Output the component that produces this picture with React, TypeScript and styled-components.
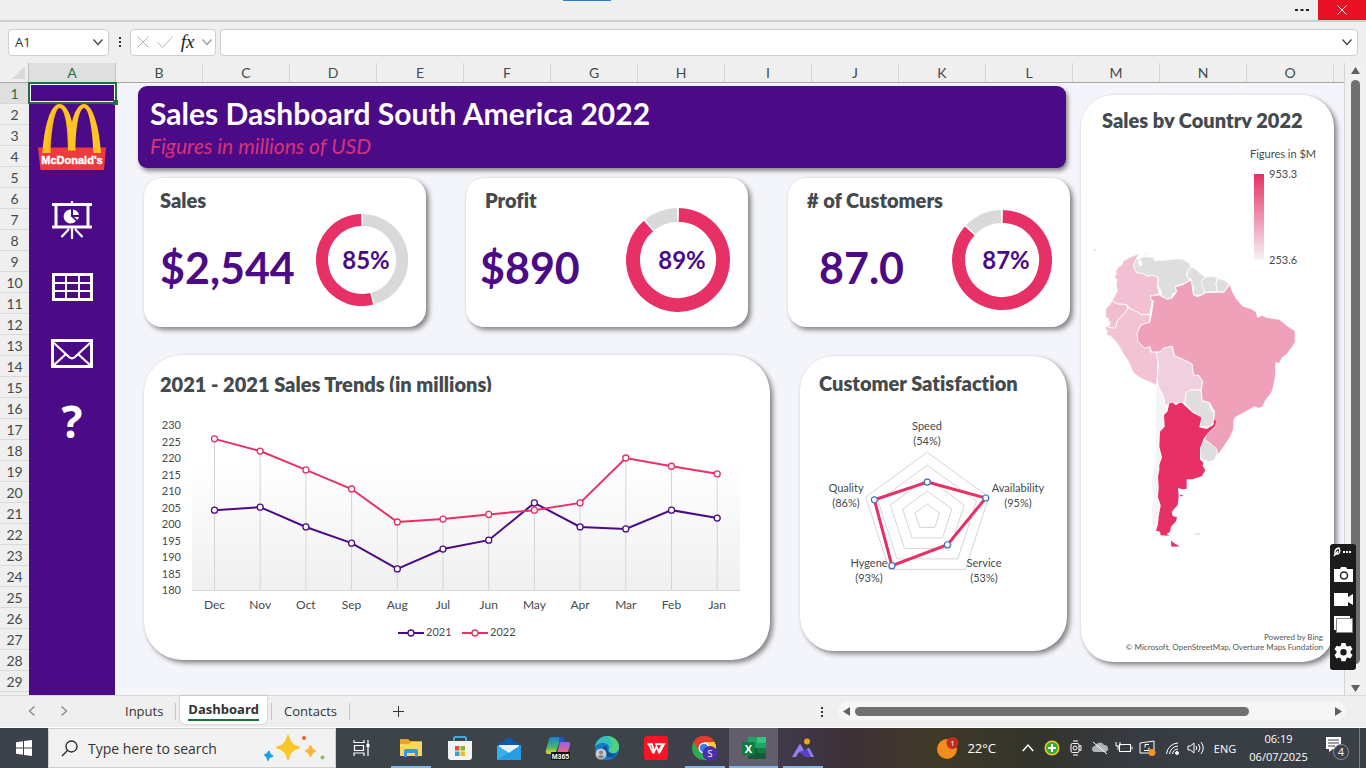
import React from 'react';
import styled, { createGlobalStyle } from 'styled-components';

const PURPLE = '#4b0b86';
const PINK = '#e73065';
const INK = '#444a4d';
const UI = '"Open Sans", "Noto Sans", sans-serif';
const BODY = 'Lato, "Open Sans", sans-serif';

const Global = createGlobalStyle`
  * { box-sizing: border-box; }
  html, body { margin: 0; padding: 0; }
  body { background: #efefef; font-family: ${BODY}; color: ${INK}; font-variant-ligatures: none; }
  button { font: inherit; color: inherit; background: none; border: 0; padding: 0; cursor: pointer; }
  input { font: inherit; color: inherit; border: 0; outline: 0; background: none; padding: 0; min-width: 0; }
  svg { display: block; }
  h1, h2, p { margin: 0; }
`;

const Page = styled.div`
  min-height: 100vh;
  display: flex;
  flex-direction: column;
`;

/* ---------- window top ---------- */
const TitleBar = styled.header`
  height: 20px;
  display: flex;
  justify-content: flex-end;
  align-items: stretch;
  background: #efefef;
  position: relative;
`;
const Progress = styled.span`
  position: absolute;
  left: 563px;
  top: 0;
  width: 48px;
  height: 1px;
  background: #2f7dc8;
`;
const MoreButton = styled.button`
  width: 32px;
  display: grid;
  place-items: center;
`;
const CloseButton = styled.button`
  width: 48px;
  display: grid;
  place-items: center;
  background: #e81123;
`;
const FormulaBar = styled.div`
  height: 43px;
  display: flex;
  align-items: center;
  padding: 0 8px 1px;
  border-top: 2px solid #cfcfcf;
  background: #efefef;
`;
const Field = styled.div<{ $w?: number }>`
  height: 27px;
  ${p => (p.$w ? `width: ${p.$w}px;` : 'flex: 1;')}
  display: flex;
  align-items: center;
  justify-content: space-between;
  padding: 0 4px 0 6px;
  background: #fff;
  border: 1px solid #cfcfcf;
  border-radius: 4px;
  font: 13px ${UI};
  color: #333;
  input { flex: 1; }
`;
const Dots = styled.span`
  width: 21px;
  display: grid;
  place-items: center;
`;
const Tools = styled.div`
  width: 86px;
  height: 27px;
  margin-right: 4px;
  padding: 0 2px 0 5px;
  display: flex;
  align-items: center;
  justify-content: space-between;
  background: #fff;
  border: 1px solid #cfcfcf;
  border-radius: 4px;
`;
const Fx = styled.em`
  font: italic 19px "Liberation Serif", serif;
  color: #222;
  line-height: 20px;
`;

/* ---------- sheet ---------- */
const SheetArea = styled.div`
  flex: 1;
  display: flex;
`;
const Sheet = styled.div`
  flex: 1;
  min-width: 0;
  display: flex;
  flex-direction: column;
  border-right: 1px solid #d5d5d5;
  overflow: hidden;
`;
const ColumnHeads = styled.div`
  height: 20px;
  display: flex;
  border-bottom: 1px solid #a9a4aa;
  font-size: 14px;
  line-height: 20px;
  text-align: center;
`;
const Corner = styled.div`
  width: 29px;
  flex: none;
  display: flex;
  justify-content: flex-end;
  align-items: flex-end;
  padding: 0 3px 3px 0;
  border-right: 1px solid #bdbdbd;
`;
const ColumnHead = styled.div<{ $on?: boolean }>`
  width: 87px;
  flex: none;
  border-right: 1px solid ${p => (p.$on ? '#c2c2c2' : '#d6d6d6')};
  background: ${p => (p.$on ? '#dfdfdf' : 'transparent')};
  color: ${p => (p.$on ? '#1f7145' : INK)};
`;
const SheetBody = styled.div`
  flex: 1;
  display: flex;
`;
const RowHeads = styled.div`
  width: 29px;
  flex: none;
  font-size: 14px;
  line-height: 22px;
  text-align: center;
`;
const RowHead = styled.div<{ $on?: boolean }>`
  height: 21px;
  border-bottom: 1px solid #d9d9d9;
  background: ${p => (p.$on ? '#dfdfdf' : 'transparent')};
  color: ${p => (p.$on ? '#1f7145' : INK)};
`;
const Side = styled.nav`
  width: 86px;
  flex: none;
  padding-top: 21px;
  background: ${PURPLE};
  position: relative;
  display: flex;
  flex-direction: column;
  align-items: center;
`;
const Logo = styled.a`
  height: 82px;
  display: block;
`;
const SideLink = styled.a`
  width: 100%;
  height: 67px;
  display: grid;
  place-items: center;
  color: #fff;
  font: 700 44px/44px ${UI};
  text-decoration: none;
`;
const Selection = styled.span`
  position: absolute;
  left: -1px;
  top: -1px;
  right: -2px;
  height: 22px;
  border: 2px solid #1f7145;
  box-shadow: inset 0 0 0 1px #fff;
  &::after {
    content: '';
    position: absolute;
    right: -3px;
    bottom: -3px;
    width: 5px;
    height: 5px;
    background: #1f7145;
  }
`;
const Dashboard = styled.main`
  flex: 1;
  min-width: 0;
  display: flex;
  align-items: flex-start;
  gap: 11px;
  padding: 3px 10px 0 29px;
  background: #f4f5fa;
`;
const Main = styled.div`
  flex: 1;
  min-width: 0;
`;
const Banner = styled.div`
  min-height: 82px;
  margin: 0 4px 10px -6px;
  padding: 8px 12px;
  border-radius: 9px;
  background: ${PURPLE};
  box-shadow: 2px 3px 4px rgba(0, 0, 0, 0.45);
`;
const BannerTitle = styled.h1`
  font-size: 30px;
  line-height: 38px;
  font-weight: 700;
  color: #fff;
`;
const BannerSub = styled.p`
  font-size: 21px;
  line-height: 28px;
  font-style: italic;
  color: #d8327a;
`;
const Card = styled.section<{ $radius: number }>`
  background: #fff;
  border-radius: ${p => p.$radius}px;
  box-shadow: 3px 3px 5px rgba(0, 0, 0, 0.45), 0 0 2px rgba(0, 0, 0, 0.1);
`;
const Heading = styled.h2<{ $inset?: number }>`
  font-size: 20px;
  line-height: 24px;
  font-weight: 800;
  color: ${INK};
  padding-left: ${p => p.$inset ?? 0}px;
  white-space: nowrap;
`;
const Kpis = styled.div`
  display: grid;
  grid-template-columns: repeat(3, minmax(0, 1fr));
  gap: 40px;
  margin-bottom: 28px;
`;
const KpiCard = styled(Card)`
  min-height: 149px;
  display: flex;
  justify-content: space-between;
  padding: 10px 18px 0 0;
`;
const KpiValue = styled.p<{ $inset: number }>`
  margin-top: 30px;
  padding-left: ${p => p.$inset}px;
  font-size: 43px;
  line-height: 52px;
  font-weight: 700;
  color: ${PURPLE};
`;
const DonutBox = styled.div`
  display: flex;
  align-items: center;
  padding-top: 5px;
`;
const Charts = styled.div`
  display: grid;
  grid-template-columns: minmax(0, 626fr) minmax(0, 267fr);
  gap: 30px;
  align-items: start;
  margin-right: 3px;
`;
const TrendCard = styled(Card)`
  min-height: 305px;
  padding: 17px 0 0;
  svg { width: 100%; height: auto; margin-top: 8px; }
`;
const ClippedHeading = styled(Heading)`
  height: 20px;
  overflow: hidden;
`;
const RadarCard = styled(Card)`
  min-height: 295px;
  margin-top: 1px;
  padding-top: 15px;
  svg { width: 100%; height: auto; margin-top: 5px; }
`;
const MapCard = styled(Card)`
  width: 253px;
  min-height: 567px;
  margin-top: 9px;
  padding: 13px 11px 10px 0;
  display: flex;
  flex-direction: column;
`;
const MapStage = styled.div`
  flex: 1;
  display: grid;
  align-content: start;
  > * { grid-area: 1 / 1; }
`;
const Legend = styled.div`
  justify-self: end;
  width: 70px;
  margin: 18px 7px 0 0;
  font-size: 11px;
  line-height: 16px;
  white-space: nowrap;
  text-align: right;
`;
const Scale = styled.div`
  display: grid;
  grid-template-columns: 10px auto;
  gap: 5px;
  height: 106px;
  padding: 4px 0 0 8px;
  text-align: left;
  font-size: 11px;
`;
const ScaleBar = styled.span`
  margin: 8px 0;
  background: linear-gradient(#e73065, #f6f3f7);
`;
const ScaleText = styled.span`
  display: flex;
  flex-direction: column;
  justify-content: space-between;
`;
const MapShape = styled.div`
  width: 235px;
  margin-top: 117px;
`;
const Credit = styled.p`
  font-size: 8px;
  line-height: 10px;
  text-align: right;
  white-space: nowrap;
  color: #555;
`;

/* ---------- scrollbars ---------- */
const VScroll = styled.div`
  width: 21px;
  flex: none;
  display: flex;
  flex-direction: column;
  align-items: center;
  padding: 3px 0 2px;
  gap: 5px;
  background: #f1f1f1;
`;
const VThumb = styled.div`
  width: 9px;
  height: 584px;
  border-radius: 5px;
  background: #707070;
`;
const Spring = styled.span`
  flex: 1;
`;
const TabBar = styled.div`
  height: 33px;
  display: flex;
  align-items: flex-start;
  border-top: 1px solid #d9d9d9;
  border-bottom: 1px solid #fff;
  background: #efefef;
  font: 13px ${UI};
  color: #333;
`;
const TabNav = styled.div`
  width: 113px;
  height: 30px;
  display: flex;
  align-items: center;
  gap: 20px;
  padding-left: 26px;
`;
const Tab = styled.button<{ $on?: boolean }>`
  height: ${p => (p.$on ? 28 : 30)}px;
  padding: 0 ${p => (p.$on ? 8 : 12)}px;
  background: ${p => (p.$on ? '#fff' : 'transparent')};
  border-radius: 0 0 5px 5px;
  box-shadow: ${p => (p.$on ? '0 0 2px rgba(0,0,0,.3)' : 'none')};
  font-weight: ${p => (p.$on ? 700 : 400)};
  color: #333;
  span {
    display: block;
    line-height: 20px;
    border-bottom: ${p => (p.$on ? '2px solid #16733f' : '0')};
  }
`;
const Divider = styled.i<{ $m?: string }>`
  width: 1px;
  height: 17px;
  margin: ${p => p.$m ?? '7px 0 0'};
  background: #c6c6c6;
`;
const AddTab = styled.button`
  width: 96px;
  height: 30px;
  display: grid;
  place-items: center;
`;
const HScroll = styled.div`
  width: 508px;
  height: 18px;
  margin: 6px 20px 0 6px;
  display: flex;
  align-items: center;
  padding: 0 3px 0 4px;
  gap: 4px;
  border-radius: 9px;
  background: #f6f6f6;
`;
const HThumb = styled.div`
  width: 394px;
  height: 9px;
  border-radius: 5px;
  background: #707070;
`;
const TabDots = styled.span`
  width: 21px;
  height: 32px;
  display: grid;
  place-items: center;
`;

/* ---------- taskbar ---------- */
const Taskbar = styled.footer`
  height: 40px;
  display: flex;
  align-items: stretch;
  color: #fff;
  font: 11px ${UI};
  background: linear-gradient(90deg, #3b4249 0, #3d4449 45%, #403a4c 57%, #3e3038 62%, #403a28 68%, #33342c 76%, #373b42 83%, #3b3f47 100%);
`;
const TaskButton = styled.button<{ $open?: boolean; $on?: boolean }>`
  width: 49px;
  display: grid;
  place-items: center;
  position: relative;
  background: ${p => (p.$on ? '#645d6c' : 'transparent')};
  &::after {
    content: '';
    display: ${p => (p.$open ? 'block' : 'none')};
    position: absolute;
    bottom: 0;
    left: ${p => (p.$on ? 0 : 5)}px;
    right: ${p => (p.$on ? 0 : 4)}px;
    height: 2px;
    background: #7db8ea;
  }
`;
const Tasks = styled.div`
  display: flex;
  padding-left: 1px;
`;
const StartButton = styled.button`
  width: 48px;
  display: grid;
  place-items: center;
`;
const SearchBox = styled.label`
  width: 288px;
  display: flex;
  align-items: center;
  gap: 10px;
  padding: 0 9px 0 12px;
  background: #f2f2f2;
  border: 1px solid #cfcfcf;
  color: #333;
  font: 14px ${UI};
  input { flex: 1; }
  input::placeholder { color: #333; opacity: 1; }
`;
const Weather = styled.button`
  display: flex;
  align-items: center;
  gap: 7px;
  margin-right: 20px;
  font-size: 13px;
`;
const Tray = styled.div`
  display: flex;
`;
const TrayButton = styled.button`
  width: 24px;
  display: grid;
  place-items: center;
`;
const Language = styled.button`
  width: 34px;
  text-align: center;
`;
const Clock = styled.time`
  width: 73px;
  text-align: center;
  line-height: 18px;
  padding-top: 2px;
`;
const Notify = styled.button`
  width: 45px;
  display: grid;
  place-items: center;
  border-right: 1px solid #777b80;
  margin-right: 6px;
`;

/* ---------- floating capture palette ---------- */
const Palette = styled.aside`
  position: fixed;
  right: 10px;
  bottom: 98px;
  width: 26px;
  height: 126px;
  padding: 3px 0 8px;
  display: flex;
  flex-direction: column;
  align-items: center;
  justify-content: space-between;
  border-radius: 3px;
  background: #1b1b1b;
`;

const Chevron = ({ color = '#444', dir = 'down', size = 12 }: { color?: string; dir?: 'down' | 'left' | 'right' | 'up'; size?: number }) => {
  const d = {
    down: 'M1.5 3.5 6 8.5l4.5-5',
    up: 'M1.5 8.5 6 3.5l4.5 5',
    left: 'M8.500 1.500 3.500 6l5 4.500',
    right: 'M3.500 1.500l5 4.500-5 4.500',
  }[dir];
  return (
    <svg width={size} height={size} viewBox="0 0 12 12" fill="none" stroke={color} strokeWidth="1.3">
      <path d={d} />
    </svg>
  );
};

const VDots = () => (
  <svg width="4" height="12" fill="#333">
    <path d="M1 1h2v2H1zM1 5h2v2H1zM1 9h2v2H1z" />
  </svg>
);

const Arrow = ({ d }: { d: string }) => (
  <svg width="9" height="9" fill="#606060"><path d={d} /></svg>
);

/* ring segment between two clockwise angles */
const arc = (c: number, r: number, from: number, to: number) => {
  const at = (deg: number) => {
    const t = (deg * Math.PI) / 180;
    return `${(c + r * Math.sin(t)).toFixed(1)} ${(c - r * Math.cos(t)).toFixed(1)}`;
  };
  return `M${at(from)}A${r} ${r} 0 ${to - from > 180 ? 1 : 0} 1 ${at(to)}`;
};

type DonutProps = { size: number; ring: number; split: number; first: string; second: string; label: string };
const Donut = ({ size, ring, split, first, second, label }: DonutProps) => {
  const c = size / 2;
  const r = c - ring / 2;
  return (
    <svg width={size} height={size}>
      <path d={arc(c, r, 1, split - 1)} fill="none" stroke={first} strokeWidth={ring} />
      <path d={arc(c, r, split + 1, 359)} fill="none" stroke={second} strokeWidth={ring} />
      <text x={c + 4} y={c + 9} textAnchor="middle" fontSize="24" fontWeight="700" fill={PURPLE} fontFamily={BODY}>{label}</text>
    </svg>
  );
};

const kpis = [
  { title: 'Sales', value: '$2,544', head: 16, inset: 16, donut: { size: 92, ring: 12, split: 165, first: '#d9d9d9', second: PINK, label: '85%' } },
  { title: 'Profit', value: '$890', head: 19, inset: 14, donut: { size: 104, ring: 14, split: 320, first: PINK, second: '#d9d9d9', label: '89%' } },
  { title: '# of Customers', value: '87.0', head: 19, inset: 31, donut: { size: 100, ring: 13, split: 313, first: PINK, second: '#d9d9d9', label: '87%' } },
];

const months = ['Dec', 'Nov', 'Oct', 'Sep', 'Aug', 'Jul', 'Jun', 'May', 'Apr', 'Mar', 'Feb', 'Jan'];
const s2021 = [204.2, 205.1, 199.1, 194.2, 186.4, 192.4, 195.1, 206.4, 199.1, 198.5, 204.2, 201.8];
const s2022 = [225.8, 222.1, 216.4, 210.6, 200.6, 201.5, 202.9, 204.2, 206.4, 220, 217.5, 215.2];
const px = (i: number) => 70.5 + i * 45.7;
const py = (v: number) => 190 - (v - 180) * 3.3;

const Series = ({ data, color }: { data: number[]; color: string }) => (
  <g stroke={color} fill="none" strokeWidth="2">
    <polyline points={data.map((v, i) => `${px(i)},${py(v)}`).join(' ')} />
    {data.map((v, i) => (
      <circle key={i} cx={px(i)} cy={py(v)} r="3" fill="#fff" strokeWidth="1.3" />
    ))}
  </g>
);

const TrendChart = () => (
  <svg viewBox="0 0 626 250" fontFamily={BODY} fontSize="12" fill={INK}>
    <defs>
      <linearGradient id="plot" x1="0" x2="0" y1="0" y2="1">
        <stop offset="0.2" stopColor="#fff" />
        <stop offset="1" stopColor="#f0f0f0" />
      </linearGradient>
    </defs>
    <rect x="48" y="25" width="548" height="165" fill="url(#plot)" />
    <path d="M48 190.500H596" stroke="#d5d5d5" />
    {months.map((m, i) => (
      <g key={m}>
        <path d={`M${px(i)} ${py(Math.max(s2021[i], s2022[i]))}V190`} stroke="#d5d5d5" />
        <text x={px(i)} y="209" textAnchor="middle">{m}</text>
      </g>
    ))}
    {Array.from({ length: 11 }, (_, k) => 230 - k * 5).map(v => (
      <text key={v} x="37" y={py(v) + 4} textAnchor="end" fontSize="11">{v}</text>
    ))}
    <Series data={s2021} color={PURPLE} />
    <Series data={s2022} color={PINK} />
    <g strokeWidth="2">
      <path d="M254 233h26" stroke={PURPLE} />
      <circle cx="267" cy="233" r="3" fill="#fff" stroke={PURPLE} strokeWidth="1.3" />
      <path d="M318 233h26" stroke={PINK} />
      <circle cx="331" cy="233" r="3" fill="#fff" stroke={PINK} strokeWidth="1.3" />
    </g>
    <text x="282" y="236" fontSize="11">2021</text>
    <text x="346" y="236" fontSize="11">2022</text>
  </svg>
);

const spokes = [
  { name: 'Speed', v: 54, x: 127, y: 30 },
  { name: 'Availability', v: 95, x: 218, y: 92 },
  { name: 'Service', v: 53, x: 184, y: 167 },
  { name: 'Hygene', v: 93, x: 69, y: 167 },
  { name: 'Quality', v: 86, x: 46, y: 92 },
];
const spoke = (i: number, k: number) => {
  const t = (i * 72 * Math.PI) / 180;
  return [127.3 + 64.7 * k * Math.sin(t), 117 - 64.7 * k * Math.cos(t)];
};

const RadarChart = () => (
  <svg viewBox="0 0 267 200" fontFamily={BODY} fontSize="11" fill={INK} textAnchor="middle">
    {[0.2, 0.4, 0.6, 0.8, 1].map(k => (
      <polygon key={k} points={spokes.map((_, i) => spoke(i, k).join()).join(' ')} fill="none" stroke="#d5d5d5" />
    ))}
    <polygon points={spokes.map((s, i) => spoke(i, s.v / 100).join()).join(' ')} fill="none" stroke={PINK} strokeWidth="3" />
    {spokes.map((s, i) => {
      const [x, y] = spoke(i, s.v / 100);
      return (
        <g key={s.name}>
          <circle cx={x} cy={y} r="3" fill="#fff" stroke="#4472c4" strokeWidth="1.2" />
          <text x={s.x} y={s.y}>{s.name}</text>
          <text x={s.x} y={s.y + 15}>({s.v}%)</text>
        </g>
      );
    })}
  </svg>
);

const countries: [string, string][] = [
  ['#f3f4f8', 'M240 466 248 470 262 500 268 528 276 545 264 555 266 590 252 605 250 650 256 680 250 720 248 800 250 860 240 902 228 880 226 840 232 800 226 760 236 700 240 640 238 560Z'],
  ['#f2c0d3', 'M190 70 176 76 160 83 142 92 138 104 128 110 118 125 121 133 115 140 123 150 120 165 124 182 108 212 125 222 152 224 162 236 185 246 196 254 222 252 228 215 224 198 250 192 244 170 247 141 230 136 215 138 198 130 182 128 172 108 180 88Z'],
  ['#dedede', 'M180 88 195 84 205 80 232 82 236 92 270 90 300 86 320 88 340 100 345 112 334 124 332 135 342 152 318 163 298 168 302 185 290 192 288 204 275 208 258 198 254 180 246 165 247 141 230 136 215 138 198 130 182 128 172 108Z'],
  ['#dedede', 'M348 110 362 120 375 132 388 140 378 150 380 168 388 184 376 194 362 198 350 188 354 172 346 165 348 150 334 140 334 124Z'],
  ['#dedede', 'M388 142 405 138 424 142 420 160 424 185 405 185 388 188 378 168 376 154Z'],
  ['#dedede', 'M424 145 445 150 460 162 444 187 424 185 420 164Z'],
  ['#f0bccf', 'M108 212 125 222 152 224 155 236 146 250 130 265 124 272 118 295 98 292 103 275 96 277 98 266 88 262 90 235 100 226Z'],
  ['#f2c3d3', 'M152 230 162 236 185 246 196 254 222 254 222 274 212 280 195 285 183 310 186 335 205 352 222 350 224 366 240 366 246 385 244 445 240 466 220 456 205 450 186 440 170 425 158 395 142 372 130 350 118 332 105 320 92 314 94 304 87 295 96 284 98 292 118 295 124 272 146 250 155 236Z'],
  ['#eea1b9', 'M224 198 250 195 258 200 275 208 288 204 302 185 298 170 318 165 346 150 350 180 352 194 362 200 376 196 388 188 424 187 444 187 462 163 468 182 480 205 500 228 525 236 540 245 545 262 558 256 570 262 610 268 640 292 657 302 658 335 648 352 635 370 618 384 610 400 600 398 598 440 590 480 585 490 568 512 560 530 548 535 535 530 510 545 478 562 474 570 472 600 462 622 450 640 440 655 425 675 415 655 402 644 385 628 395 610 420 588 412 570 416 545 400 518 378 512 374 480 380 455 368 436 352 436 348 402 320 388 295 378 290 350 262 355 252 366 226 366 222 350 205 354 186 335 183 310 195 285 222 276 230 230 232 212 224 210Z'],
  ['#f0d0de', 'M240 368 252 366 262 355 288 348 295 378 320 388 348 402 352 436 368 436 380 455 376 480 345 480 330 490 326 518 300 520 280 520 268 528 262 500 248 470 244 445 248 400Z'],
  ['#dedede', 'M330 488 345 480 376 480 378 512 400 518 406 540 415 545 412 575 402 590 372 590 376 562 350 545 326 518Z'],
  ['#dedede', 'M385 628 402 640 420 655 425 668 415 690 398 695 376 688 372 660 378 634Z'],
];
const argentina = 'M280 520 290 518 300 526 308 520 318 518 328 528 350 548 376 562 370 592 392 597 412 585 414 570 420 572 418 588 395 610 382 628 372 655 372 688 382 698 380 708 388 720 378 738 350 748 332 748 332 776 320 778 306 774 308 798 305 825 287 845 290 858 303 862 300 874 285 890 282 905 272 912 280 917 254 916 252 905 240 902 246 882 248 860 254 826 246 802 248 770 246 740 250 720 250 705 258 682 250 650 252 605 266 590 264 555 274 545Z';

const AmericaMap = () => (
  <svg width="235" height="310" viewBox="15 45 705 930" strokeLinejoin="round">
    {countries.map(([fill, d], i) => (
      <path key={i} d={d} fill={fill} stroke="#fff" strokeWidth="2.500" />
    ))}
    <path d="M187 88 196 92 200 104 192 110 186 100Z" fill="#fff" />
    <path d={argentina} fill={PINK} />
    <path d="M285 932 298 942 312 949 286 950ZM312 795h8v4h-8z" fill={PINK} />
    <path d="M52 58h7v5h-7zM208 70h4v4h-4zM352 914l14-6h10l-8 6z" fill="#dedede" />
  </svg>
);

const McLogo = () => (
  <svg width="68" height="66" viewBox="0 0 68 66">
    <path d="M0 43.500H68L66 66H2.500Z" fill="#ee3a3f" />
    <path d="M4.500 49C6 24 12 0 21.500 0 27 0 31.500 7 34 18 36.500 7 41 0 46 0 55 0 61.500 24 63 49H55.500C54.500 26 51 4 46 4 41 4 37.500 24 37.500 46.500H30C30 24 27 4 21.500 4 17 4 13 26 12.500 49Z" fill="#ffc423" />
    <path d="M12.500 49C13 26 17 4 21.500 4 27 4 30 24 30 46.500L32 46C32 22 27 1.500 21.500 1.500 15 1.500 9 26 9 49Z" fill="#f0a51e" opacity=".3" />
    <text x="34" y="60" textAnchor="middle" fontFamily='"Liberation Sans", sans-serif' fontWeight="700" fontSize="11" fill="#fff" stroke="#fff" strokeWidth=".4">McDonald's</text>
  </svg>
);

const BoardIcon = () => (
  <svg width="40" height="38" viewBox="0 0 40 38" fill="none" stroke="#fff">
    <path d="M1 3.500H39M1 26H39" strokeWidth="3" strokeLinecap="round" />
    <path d="M4 3V26M36 3V26" strokeWidth="3" />
    <path d="M20 0V3M20 27V38M17 28 9.500 36M23 28 30.500 36" strokeWidth="2.200" />
    <path d="M19 8.500A7 7 0 1 0 24 20L19 15.500ZM21 8.500V14H27A7 7 0 0 0 21 8.500ZM27 16H22L25.500 19A7 7 0 0 0 27 16Z" fill="#fff" stroke="none" />
  </svg>
);
const TableIcon = () => (
  <svg width="41" height="28" viewBox="0 0 41 28" fill="none" stroke="#fff" strokeWidth="2">
    <rect x="1.500" y="1.500" width="38" height="25" strokeWidth="3" />
    <path d="M14 2V26M27 2V26M2 10H39M2 18H39" />
  </svg>
);
const MailIcon = () => (
  <svg width="42" height="29" viewBox="0 0 42 29" fill="none" stroke="#fff">
    <rect x="1.500" y="1.500" width="39" height="26" strokeWidth="3" />
    <path d="M3 4 18 18Q21 20.500 24 18L39 4M3 26 15 15M39 26 27 15" strokeWidth="2.200" />
  </svg>
);

const TaskViewIcon = () => (
  <svg width="17" height="16" viewBox="0 0 17 16" fill="none" stroke="#fff" strokeWidth="1.200">
    <path d="M1 0V2.500H11V0M1 16V13H11V16M1.500 5.500H10.500V10.500H1.500ZM15 0V16" />
    <path d="M13.500 4h3v3h-3z" fill="#fff" stroke="none" />
  </svg>
);
const FolderIcon = () => (
  <svg width="22" height="19" viewBox="0 0 22 19">
    <path d="M0 1Q0 0 1 0H8L10 2H21Q22 2 22 3V8H0Z" fill="#e8a522" />
    <path d="M0 5H9L11 3H22V17H0Z" fill="#fdd663" />
    <path d="M4 18V12Q4 10 6 10H16Q18 10 18 12V18H15V14H7V18Z" fill="#3f93d6" />
  </svg>
);
const StoreIcon = () => (
  <svg width="24" height="24" viewBox="0 0 24 24">
    <path d="M6 7V2.500Q6 1 7.500 1H16.500Q18 1 18 2.500V7" fill="none" stroke="#3fa9e0" strokeWidth="2" />
    <path d="M0 5H24V21Q24 24 21 24H3Q0 24 0 21Z" fill="#f3f3f3" />
    <path d="M7 10h4.500v4.500H7z" fill="#e2502a" /><path d="M12.500 10H17v4.500h-4.500z" fill="#7db829" />
    <path d="M7 15.500h4.500V20H7z" fill="#2aa3e0" /><path d="M12.500 15.500H17V20h-4.500z" fill="#f7b91b" />
  </svg>
);
const MailApp = () => (
  <svg width="24" height="23" viewBox="0 0 24 23">
    <path d="M0 8 12 0 24 8V12H0Z" fill="#0d5aa7" />
    <path d="M2 8H22V16H2Z" fill="#eaf4fb" />
    <path d="M0 8 12 16 24 8V23H0Z" fill="#35b0ee" />
    <path d="M24 8 0 23H24Z" fill="#1f8fdc" opacity=".6" />
  </svg>
);
const CopilotIcon = () => (
  <svg width="26" height="24" viewBox="0 0 26 24">
    <defs>
      <linearGradient id="ca" x1="0" x2="0" y1="0" y2="1"><stop offset="0" stopColor="#1b7fd8" /><stop offset=".6" stopColor="#46b86a" /><stop offset="1" stopColor="#f3d52b" /></linearGradient>
      <linearGradient id="cb" x1="0" x2="0" y1="0" y2="1"><stop offset="0" stopColor="#9a5cf0" /><stop offset="1" stopColor="#f46a6a" /></linearGradient>
    </defs>
    <path d="M6 1H14Q16 1 15.500 3L11 16Q10.500 18 8 18H3Q0 18 1 14L4 3Q4.500 1 6 1Z" fill="url(#ca)" />
    <path d="M14 1H17Q19 1 19.500 4L20 7H14Z" fill="#1c57c4" />
    <path d="M15 6H23Q26 6 25 9L23 16Q22 18 20 18H12Z" fill="url(#cb)" />
    <rect x="6" y="16" width="19" height="8" fill="#111" />
    <text x="15.500" y="22.500" textAnchor="middle" fontFamily='"Liberation Sans", sans-serif' fontWeight="700" fontSize="7" fill="#fff">M365</text>
  </svg>
);
const EdgeIcon = () => (
  <svg width="24" height="24" viewBox="0 0 24 24">
    <circle cx="12" cy="12" r="12" fill="#1579c8" />
    <path d="M0 11C1 4 6 0 12 0 19 0 24 5 24 11 24 15 21 17 18 17 14 17 13 15 14 13 15 9 11 7 8 7 4 7 1 9 0 11Z" fill="#35c1b9" />
    <path d="M12 0C19 0 24 5 24 11 24 15 21 17 18 17 15 17 14 16 14 14 19 12 18 4 12 0Z" fill="#57d66c" opacity=".8" />
    <path d="M8 11C6 17 11 22 18 21L22 18C15 19 11 15 12 10Z" fill="#0c4f96" />
    <circle cx="6" cy="18" r="5.500" fill="#c9cccf" />
    <circle cx="6" cy="16.500" r="2" fill="#85898d" /><path d="M2.500 21Q6 17 9.500 21 6 24 2.500 21Z" fill="#85898d" />
  </svg>
);
const WpsIcon = () => (
  <svg width="24" height="24" viewBox="0 0 24 24">
    <rect width="24" height="24" rx="3" fill="#fd1224" />
    <path d="M3.500 8.200H8L10.200 15.500 12.500 10.500 14.500 15.500 18.500 8.200H11M5 8.500 9 16.500H10.500M14 16.500H15.500L20 8.200H18" fill="none" stroke="#fff" strokeWidth="1.800" />
  </svg>
);
const ChromeIcon = () => (
  <svg width="26" height="26" viewBox="0 0 26 26">
    <circle cx="12" cy="13" r="12" fill="#2da94f" />
    <path d="M1.500 7A12 12 0 0 1 22.500 7L12 9Z" fill="#e33b2e" />
    <path d="M12 7H22.500A12 12 0 0 1 13 25L17 14Z" fill="#fcc934" />
    <path d="M1.500 7 7 16 12 7Z" fill="#e33b2e" />
    <circle cx="12" cy="13" r="5.500" fill="#fff" /><circle cx="12" cy="13" r="4.300" fill="#3b7ded" />
    <circle cx="18" cy="18.500" r="7.500" fill="#4c2fb0" />
    <text x="18" y="22" textAnchor="middle" fontFamily='"Open Sans", sans-serif' fontSize="9" fill="#fff">S</text>
  </svg>
);
const ExcelIcon = () => (
  <svg width="24" height="22" viewBox="0 0 24 22">
    <path d="M6 0H15V11H6Z" fill="#21a366" /><path d="M15 0H24V6H15Z" fill="#33c481" />
    <path d="M15 6H24V11H15Z" fill="#21a366" /><path d="M6 11H24V22H6Z" fill="#185c37" /><path d="M15 11H24V16H15Z" fill="#107c41" />
    <rect y="5" width="13" height="13" rx="1" fill="#107c41" />
    <text x="6.500" y="15.500" textAnchor="middle" fontFamily='"Open Sans", sans-serif' fontWeight="700" fontSize="11" fill="#fff">X</text>
  </svg>
);
const PhotoIcon = () => (
  <svg width="24" height="20" viewBox="0 0 24 20">
    <path d="M1 19 8 7Q9 5.500 10 7L14 14 16 11Q17.500 9 19 11L23 19H16L13 17 8 14 5 19Z" fill="#8f7ff0" />
    <path d="M8 14 16 11 20 19H14Z" fill="#5b3fc4" />
    <circle cx="16" cy="3.500" r="3" fill="#f5a30f" />
  </svg>
);
const Sparkles = () => (
  <svg width="62" height="26" viewBox="0 0 62 26">
    <path d="M24 1Q26 11 35 12.500 26 14 24 24 22 14 13 12.500 22 11 24 1Z" fill="#fbc728" stroke="#fbc728" strokeWidth="2" strokeLinejoin="round" />
    <path d="M46.500 10Q47.500 15 52 16 47.500 17 46.500 22 45.500 17 41 16 45.500 15 46.500 10Z" fill="#f9b62c" stroke="#f9b62c" />
    <path d="M5 16Q5.500 20 9 21 5 21.500 4 25 3 21 1 20 4 19.500 5 16Z" fill="#1ba1e6" stroke="#1ba1e6" strokeWidth="1.500" />
    <circle cx="40" cy="3" r="2" fill="#e8622c" /><circle cx="58.500" cy="22.500" r="2" fill="#8cc152" />
  </svg>
);

const tray: [string, React.ReactNode][] = [
  ['Show hidden icons', <Chevron key="c" dir="up" color="#fff" size={14} />],
  ['Protection', <svg key="p" width="16" height="16"><circle cx="8" cy="8" r="7.500" fill="#f2cf1f" /><circle cx="8" cy="8" r="6" fill="#36a83b" /><path d="M8 4v8M4 8h8" stroke="#fff" strokeWidth="2" /></svg>],
  ['Meet now', <svg key="m" width="12" height="16" fill="none" stroke="#fff"><rect x="1" y="3.500" width="8" height="9" rx="1.500" /><circle cx="5" cy="8" r="2" /><path d="M9 6.500l2-1v5l-2-1M3 1h5M3 15h5" /></svg>],
  ['Cloud storage', <svg key="o" width="18" height="14"><path d="M4 11a3 3 0 0 1 0-6 5 5 0 0 1 9-1 3.500 3.500 0 0 1 1 7Z" fill="#aeb2b6" /><path d="M2 1l14 12" stroke="#fff" /></svg>],
  ['Battery', <svg key="b" width="18" height="14" fill="none" stroke="#fff"><rect x="4.500" y="3.500" width="11" height="7" /><path d="M17 5.500v3M1 1v4h4V1M3 5v4" /></svg>],
  ['Updates', <svg key="u" width="18" height="17" fill="none" stroke="#fff"><path d="M1 3l14-2v12H1ZM10 4.500H6v3M5 10.500h5v-3" /><circle cx="13" cy="12.500" r="3.500" fill="#f7941d" stroke="none" /></svg>],
  ['Network', <svg key="n" width="14" height="14" fill="none" stroke="#fff"><path d="M1.500 13A12 12 0 0 1 13 2M4.500 13A9 9 0 0 1 13 5M7.500 13A6 6 0 0 1 13 8" /><circle cx="12" cy="12" r="1.500" fill="#fff" /></svg>],
  ['Volume', <svg key="v" width="18" height="14" fill="none" stroke="#fff"><path d="M1 5h2.500L7 2v10L3.500 9H1ZM9 5q1.500 2 0 4M11.500 3q3 4 0 8M14 1q4.500 6 0 12" /></svg>],
];

const tasks: { name: string; icon: React.ReactNode; open?: boolean; on?: boolean }[] = [
  { name: 'Task view', icon: <TaskViewIcon /> },
  { name: 'Explorer', icon: <FolderIcon />, open: true },
  { name: 'Store', icon: <StoreIcon /> },
  { name: 'Mail', icon: <MailApp /> },
  { name: 'Copilot', icon: <CopilotIcon /> },
  { name: 'Edge', icon: <EdgeIcon /> },
  { name: 'WPS', icon: <WpsIcon /> },
  { name: 'Chrome', icon: <ChromeIcon />, open: true },
  { name: 'Excel', icon: <ExcelIcon />, open: true, on: true },
  { name: 'Photos', icon: <PhotoIcon />, open: true },
];

export default function App() {
  return (
    <Page>
      <Global />
      <TitleBar>
        <Progress />
        <MoreButton aria-label="More">
          <svg width="16" height="4" fill="#222"><path d="M1 1h3v2H1zM6.500 1h3v2h-3zM12 1h3v2h-3z" /></svg>
        </MoreButton>
        <CloseButton aria-label="Close">
          <svg width="10" height="10" stroke="#fff" fill="none"><path d="M.5.5l9 9M9.500.5l-9 9" /></svg>
        </CloseButton>
      </TitleBar>
      <FormulaBar>
        <Field $w={101}>
          <input aria-label="Name box" defaultValue="A1" />
          <button aria-label="Show names"><Chevron /></button>
        </Field>
        <Dots><VDots /></Dots>
        <Tools>
          <button aria-label="Cancel"><svg width="14" height="14" stroke="#b5b5b5" fill="none"><path d="M1.500 1.500l11 11M12.500 1.500l-11 11" /></svg></button>
          <button aria-label="Enter"><svg width="18" height="14" stroke="#b5b5b5" fill="none"><path d="M1.500 7l5 5.500 10-11" /></svg></button>
          <button aria-label="Insert function"><Fx>fx</Fx></button>
          <button aria-label="Functions"><Chevron color="#999" /></button>
        </Tools>
        <Field>
          <input aria-label="Formula" />
          <button aria-label="Expand formula bar"><Chevron /></button>
        </Field>
      </FormulaBar>

      <SheetArea>
        <Sheet>
          <ColumnHeads>
            <Corner><svg width="13" height="13"><path d="M13 0V13H0Z" fill="#d9d9d9" /></svg></Corner>
            {'ABCDEFGHIJKLMNO'.split('').map(c => <ColumnHead key={c} $on={c === 'A'}>{c}</ColumnHead>)}
          </ColumnHeads>
          <SheetBody>
            <RowHeads>
              {Array.from({ length: 29 }, (_, i) => <RowHead key={i} $on={i === 0}>{i + 1}</RowHead>)}
            </RowHeads>
            <Side>
              <Selection />
              <Logo href="#home" aria-label="Home"><McLogo /></Logo>
              <SideLink href="#dashboard" aria-label="Dashboard"><BoardIcon /></SideLink>
              <SideLink href="#inputs" aria-label="Inputs"><TableIcon /></SideLink>
              <SideLink href="#contacts" aria-label="Contacts"><MailIcon /></SideLink>
              <SideLink href="#help">?</SideLink>
            </Side>
            <Dashboard>
              <Main>
                <Banner>
                  <BannerTitle>Sales Dashboard South America 2022</BannerTitle>
                  <BannerSub>Figures in millions of USD</BannerSub>
                </Banner>
                <Kpis>
                  {kpis.map(k => (
                    <KpiCard key={k.title} $radius={18}>
                      <div>
                        <Heading $inset={k.head}>{k.title}</Heading>
                        <KpiValue $inset={k.inset}>{k.value}</KpiValue>
                      </div>
                      <DonutBox><Donut {...k.donut} /></DonutBox>
                    </KpiCard>
                  ))}
                </Kpis>
                <Charts>
                  <TrendCard $radius={38}>
                    <ClippedHeading $inset={16}>2021 - 2021 Sales Trends (in millions)</ClippedHeading>
                    <TrendChart />
                  </TrendCard>
                  <RadarCard $radius={34}>
                    <Heading $inset={19}>Customer Satisfaction</Heading>
                    <RadarChart />
                  </RadarCard>
                </Charts>
              </Main>
              <MapCard $radius={32}>
                <ClippedHeading $inset={21}>Sales by Country 2022</ClippedHeading>
                <MapStage>
                  <MapShape><AmericaMap /></MapShape>
                  <Legend>
                    Figures in $M
                    <Scale>
                      <ScaleBar />
                      <ScaleText><span>953.3</span><span>253.6</span></ScaleText>
                    </Scale>
                  </Legend>
                </MapStage>
                <Credit>Powered by Bing<br />© Microsoft, OpenStreetMap, Overture Maps Fundation</Credit>
              </MapCard>
            </Dashboard>
          </SheetBody>
        </Sheet>
        <VScroll>
          <Arrow d="M4.500 1 9 8H0Z" />
          <VThumb />
          <Spring />
          <Arrow d="M0 1H9L4.500 8Z" />
        </VScroll>
      </SheetArea>

      <TabBar>
        <TabNav>
          <button aria-label="Previous sheet"><Chevron dir="left" color="#888" /></button>
          <button aria-label="Next sheet"><Chevron dir="right" color="#888" /></button>
        </TabNav>
        <Tab>Inputs</Tab>
        <Divider $m="7px 4px 0 0" />
        <Tab $on><span>Dashboard</span></Tab>
        <Divider $m="7px 0 0 4px" />
        <Tab>Contacts</Tab>
        <Divider />
        <AddTab aria-label="New sheet"><svg width="11" height="11" stroke="#333"><path d="M5.500 0v11M0 5.500h11" /></svg></AddTab>
        <Spring />
        <TabDots><VDots /></TabDots>
        <HScroll>
          <Arrow d="M8 0V9L1 4.500Z" />
          <HThumb />
          <Spring />
          <Arrow d="M1 0V9L8 4.500Z" />
        </HScroll>
      </TabBar>

      <Taskbar>
        <StartButton aria-label="Start">
          <svg width="16" height="16" fill="#fff"><path d="M0 2.200 7 1.200V7.500H0ZM8 1 16 0V7.500H8ZM0 8.500H7V14.800L0 13.800ZM8 8.500H16V16L8 15Z" /></svg>
        </StartButton>
        <SearchBox>
          <svg width="17" height="17" fill="none" stroke="#222" strokeWidth="1.300"><circle cx="10.500" cy="6.500" r="5.500" /><path d="M6.500 10.500 1 16" /></svg>
          <input aria-label="Search" placeholder="Type here to search" />
          <Sparkles />
        </SearchBox>
        <Tasks>
          {tasks.map(t => <TaskButton key={t.name} aria-label={t.name} $open={t.open} $on={t.on}>{t.icon}</TaskButton>)}
        </Tasks>
        <Spring />
        <Weather>
          <svg width="24" height="24"><circle cx="11" cy="13" r="10" fill="#f28c1e" /><path d="M3 7A10 10 0 0 0 16 21 10 10 0 0 1 3 7Z" fill="#f9c23c" /><circle cx="16.500" cy="7" r="6" fill="#c42b1c" /><text x="16.500" y="10" textAnchor="middle" fontSize="8" fill="#fff" fontFamily='"Open Sans", sans-serif'>1</text></svg>
          22°C
        </Weather>
        <Tray>{tray.map(([n, icon]) => <TrayButton key={n} aria-label={n}>{icon}</TrayButton>)}</Tray>
        <Language>ENG</Language>
        <Clock>06:19<br />06/07/2025</Clock>
        <Notify aria-label="Notifications">
          <svg width="25" height="25"><path d="M1 1H16V13H8L4 16V13H1Z" fill="#fff" /><path d="M3 4h11M3 7h11M3 10h7" stroke="#3b3f47" /><circle cx="16" cy="16" r="7.500" fill="#3b3f47" stroke="#8c9095" /><text x="16" y="20" textAnchor="middle" fontSize="11" fill="#fff" fontFamily='"Open Sans", sans-serif'>4</text></svg>
        </Notify>
      </Taskbar>

      <Palette aria-label="Capture tools">
        <svg width="20" height="10" fill="none" stroke="#fff"><path d="M2 7q-1-5 4-6 2 4-1 6ZM1 9l4-5" strokeWidth="1.300" /><path d="M10 5h9" strokeWidth="2" strokeDasharray="2 1" /></svg>
        <button aria-label="Photo"><svg width="19" height="15"><path d="M0 2h6l1-2h5l1 2h6v13H0z" fill="#fff" /><circle cx="10" cy="8.500" r="3.500" fill="#fff" stroke="#222" strokeWidth="1.500" /></svg></button>
        <button aria-label="Video"><svg width="19" height="13" fill="#fff"><path d="M0 0h14v4l5-3v11l-5-3v4H0z" /></svg></button>
        <button aria-label="Gallery"><svg width="19" height="17"><path d="M0 0h16v14H0z" fill="#fff" /><path d="M2.500 2.500h16v14h-16z" fill="#fff" stroke="#888" /></svg></button>
        <button aria-label="Settings"><svg width="19" height="19" fill="#fff"><path fillRule="evenodd" d="M7.500 0h4l.7 2.700 1.600.9 2.700-.8 2 3.400-2 2v1.800l2 2-2 3.400-2.700-.8-1.600.9-.7 2.800h-4l-.7-2.800-1.600-.9-2.700.8-2-3.400 2-2V8.200l-2-2 2-3.400 2.700.8 1.600-.9ZM9.500 6a3.200 3.200 0 1 0 0 6.400 3.200 3.200 0 0 0 0-6.400Z" /></svg></button>
      </Palette>
    </Page>
  );
}
